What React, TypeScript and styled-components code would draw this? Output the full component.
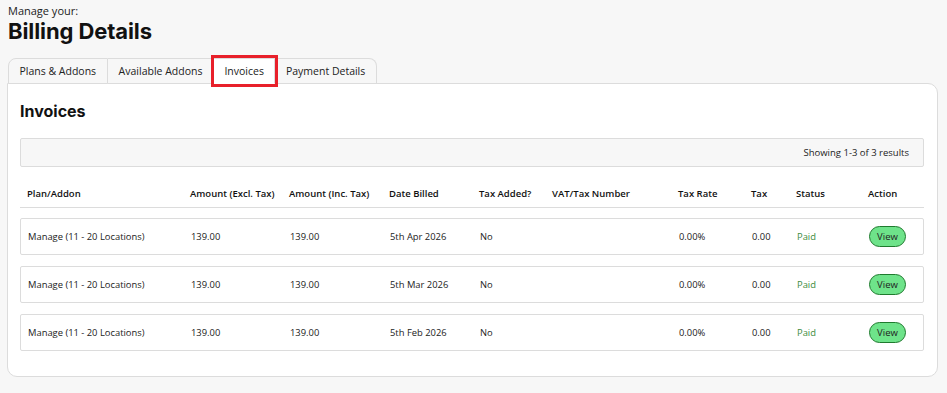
import React from "react";
import styled, { createGlobalStyle } from "styled-components";

const GlobalStyle = createGlobalStyle`
  html, body {
    margin: 0;
    padding: 0;
    background: #f7f7f7;
    font-family: "Open Sans", "Liberation Sans", sans-serif;
    color: #222;
  }
`;

const COLUMNS = "163px 99px 100px 90px 73px 126px 73px 45px 72px 1fr";

const Page = styled.div`
  padding: 4px 9px 16px 7px;
`;

const Kicker = styled.div`
  font-size: 11px;
  line-height: 14px;
  padding-left: 1px;
  color: #222;
`;

const Title = styled.h1`
  margin: 0 0 14px;
  font-family: "Inter", "Liberation Sans", sans-serif;
  font-size: 22px;
  line-height: 26px;
  font-weight: 700;
  padding-left: 1px;
  color: #111;
  letter-spacing: -0.1px;
`;

const TabBar = styled.div`
  display: flex;
  padding-left: 1px;
  margin-bottom: -1px;
  position: relative;
  z-index: 1;
`;

const Tab = styled.div<{ active?: boolean; first?: boolean; last?: boolean }>`
  height: 24px;
  display: flex;
  align-items: center;
  padding: 0 ${({ active, first }) => (active ? "10px" : first ? "10.5px" : "11px")};
  font-size: 10.5px;
  color: #222;
  background: ${({ active }) => (active ? "#fff" : "#f7f7f7")};
  border: 1px solid #dcdcdc;
  border-left: ${({ first }) => (first ? "1px solid #dcdcdc" : "none")};
  border-bottom: 1px solid ${({ active }) => (active ? "#fff" : "#dcdcdc")};
  border-top-left-radius: ${({ first }) => (first ? "8px" : "0")};
  border-top-right-radius: ${({ last }) => (last ? "8px" : "0")};
  box-shadow: ${({ active }) => (active ? "0 0 0 3px #e8202a" : "none")};
  position: relative;
  z-index: ${({ active }) => (active ? 2 : 0)};
`;

const Panel = styled.div`
  background: #fff;
  border: 1px solid #dcdcdc;
  border-radius: 0 10px 10px 10px;
  padding: 16px 13px 25px 12px;
`;

const PanelTitle = styled.h2`
  margin: 0 0 16px;
  font-family: "Inter", "Liberation Sans", sans-serif;
  font-size: 16px;
  line-height: 22px;
  font-weight: 700;
  color: #111;
`;

const ResultsBar = styled.div`
  height: 27px;
  background: #f7f7f7;
  border: 1px solid #dcdcdc;
  border-radius: 2px;
  display: flex;
  align-items: center;
  justify-content: flex-end;
  padding-right: 14px;
  font-size: 9.5px;
  color: #222;
  margin-bottom: 13px;
`;

const HeaderRow = styled.div`
  display: grid;
  grid-template-columns: ${COLUMNS};
  align-items: center;
  height: 27px;
  padding-left: 7px;
  border-bottom: 1px solid #dcdcdc;
  margin-bottom: 10px;
`;

const HeadCell = styled.div`
  font-size: 9.5px;
  font-weight: 600;
  color: #111;
  white-space: nowrap;
`;

const Rows = styled.div`
  display: flex;
  flex-direction: column;
  gap: 11px;
`;

const Row = styled.div`
  display: grid;
  grid-template-columns: ${COLUMNS};
  align-items: center;
  height: 37px;
  box-sizing: border-box;
  padding-left: 7px;
  border: 1px solid #dcdcdc;
  border-radius: 2px;
`;

const Cell = styled.div<{ tone?: "paid" }>`
  font-size: 9.4px;
  color: ${({ tone }) => (tone === "paid" ? "#3d8c3d" : "#222")};
  white-space: nowrap;
`;

const ViewButton = styled.button`
  display: block;
  width: 37px;
  height: 21px;
  padding: 0;
  border: 1px solid #1f7a2e;
  border-radius: 11px;
  background: #6ee38a;
  font-family: "Open Sans", "Liberation Sans", sans-serif;
  font-size: 9.5px;
  color: #222;
  cursor: pointer;
`;

const headers = [
  "Plan/Addon",
  "Amount (Excl. Tax)",
  "Amount (Inc. Tax)",
  "Date Billed",
  "Tax Added?",
  "VAT/Tax Number",
  "Tax Rate",
  "Tax",
  "Status",
  "Action",
];

const invoices = [
  { date: "5th Apr 2026" },
  { date: "5th Mar 2026" },
  { date: "5th Feb 2026" },
];

const tabs = ["Plans & Addons", "Available Addons", "Invoices", "Payment Details"];

export default function App() {
  return (
    <>
      <GlobalStyle />
      <Page>
        <Kicker>Manage your:</Kicker>
        <Title>Billing Details</Title>
        <TabBar>
          {tabs.map((t, i) => (
            <Tab key={t} active={t === "Invoices"} first={i === 0} last={i === tabs.length - 1}>
              {t}
            </Tab>
          ))}
        </TabBar>
        <Panel>
          <PanelTitle>Invoices</PanelTitle>
          <ResultsBar>Showing 1-3 of 3 results</ResultsBar>
          <HeaderRow>
            {headers.map((h) => (
              <HeadCell key={h}>{h}</HeadCell>
            ))}
          </HeaderRow>
          <Rows>
            {invoices.map((inv) => (
              <Row key={inv.date}>
                <Cell>Manage (11 - 20 Locations)</Cell>
                <Cell>139.00</Cell>
                <Cell>139.00</Cell>
                <Cell>{inv.date}</Cell>
                <Cell>No</Cell>
                <Cell />
                <Cell>0.00%</Cell>
                <Cell>0.00</Cell>
                <Cell tone="paid">Paid</Cell>
                <div>
                  <ViewButton>View</ViewButton>
                </div>
              </Row>
            ))}
          </Rows>
        </Panel>
      </Page>
    </>
  );
}
